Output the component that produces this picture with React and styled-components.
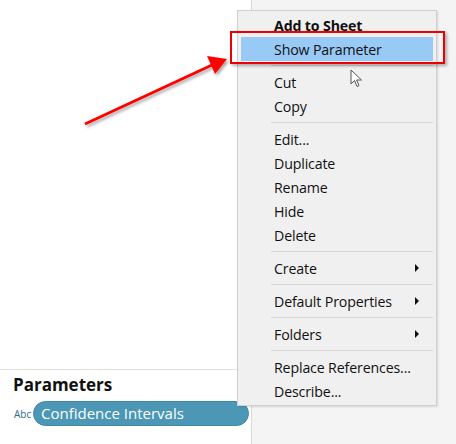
import React from "react";
import styled, { createGlobalStyle } from "styled-components";

const GlobalStyle = createGlobalStyle`
  html, body {
    margin: 0;
    padding: 0;
    background: #f4f4f4;
  }
  #root {
    width: 456px;
    height: 444px;
    overflow: hidden;
  }
`;

const menuItems = [
  { label: "Add to Sheet", bold: true },
  { label: "Show Parameter", active: true },
  { sep: true },
  { label: "Cut" },
  { label: "Copy" },
  { sep: true },
  { label: "Edit..." },
  { label: "Duplicate" },
  { label: "Rename" },
  { label: "Hide" },
  { label: "Delete" },
  { sep: true },
  { label: "Create", sub: true },
  { sep: true },
  { label: "Default Properties", sub: true },
  { sep: true },
  { label: "Folders", sub: true },
  { sep: true },
  { label: "Replace References..." },
  { label: "Describe..." },
];

export default function App() {
  return (
    <>
      <GlobalStyle />
      <Page>
        <LeftPanel>
          <ParamSection>
            <SectionTitle>Parameters</SectionTitle>
            <ParamRow>
              <TypeTag>Abc</TypeTag>
              <Pill>Confidence Intervals</Pill>
            </ParamRow>
          </ParamSection>
        </LeftPanel>
        <RightArea />

        <Menu>
          {menuItems.map((item, i) =>
            item.sep ? (
              <Separator key={i} />
            ) : (
              <MenuItem key={i} $bold={item.bold} $active={item.active}>
                <span>{item.label}</span>
                {item.sub && <SubArrow />}
              </MenuItem>
            )
          )}
        </Menu>

        <Highlight />

        <Cursor width="14" height="20" viewBox="0 0 14 20">
          <path
            d="M1 1 L1 15 L4.5 11.5 L7 17.5 L9 16.6 L6.6 11 L11.5 11 Z"
            fill="#fff"
            stroke="#555"
            strokeWidth="1"
            strokeLinejoin="round"
          />
        </Cursor>

        <Arrow width="160" height="80" viewBox="0 0 160 80">
          <defs>
            <filter id="sh" x="-20%" y="-20%" width="140%" height="140%">
              <feDropShadow dx="2" dy="2" stdDeviation="1.5" floodColor="#000" floodOpacity="0.35" />
            </filter>
          </defs>
          <g filter="url(#sh)">
            <line x1="5" y1="73" x2="132" y2="14" stroke="#f00" strokeWidth="3" />
            <polygon points="147,8 127,5 135,23" fill="#f00" />
          </g>
        </Arrow>
      </Page>
    </>
  );
}

const Page = styled.div`
  position: relative;
  display: flex;
  width: 456px;
  height: 444px;
  font-family: "Open Sans", "Noto Sans", sans-serif;
`;

const LeftPanel = styled.div`
  width: 251px;
  background: #ffffff;
  border-right: 1px solid #d9d9d9;
  display: flex;
  flex-direction: column;
  justify-content: flex-end;
`;

const ParamSection = styled.div`
  height: 75px;
  border-top: 1px solid #e2e2e2;
  box-sizing: border-box;
  padding: 3px 0 0 13px;
`;

const SectionTitle = styled.div`
  font-size: 17px;
  font-weight: 700;
  color: #111;
  line-height: 23px;
`;

const ParamRow = styled.div`
  display: flex;
  align-items: center;
  margin-top: 5px;
`;

const TypeTag = styled.span`
  font-size: 10px;
  color: #2f6a8a;
  width: 20px;
  margin-left: 1px;
`;

const Pill = styled.div`
  width: 216px;
  height: 25px;
  box-sizing: border-box;
  background: #4b97b5;
  border: 1px solid #3f88a6;
  border-radius: 13px;
  color: #fff;
  font-size: 15px;
  line-height: 22px;
  padding-left: 7px;
  margin-left: -1px;
`;

const RightArea = styled.div`
  flex: 1;
  background: #f4f4f4;
`;

const Menu = styled.div`
  position: absolute;
  left: 237px;
  top: 10px;
  width: 200px;
  box-sizing: border-box;
  padding: 2px 3px;
  background: #f0f0f0;
  border: 1px solid #cfcfcf;
  box-shadow: 1px 1px 2px rgba(0, 0, 0, 0.12);
`;

const MenuItem = styled.div`
  height: 24px;
  display: flex;
  align-items: center;
  justify-content: space-between;
  padding: 0 14px 0 33px;
  font-size: 14.2px;
  font-weight: ${(p) => (p.$bold ? 700 : 400)};
  color: #111;
  background: ${(p) => (p.$active ? "#99c9f5" : "transparent")};
  letter-spacing: -0.15px;
`;

const SubArrow = styled.span`
  width: 0;
  height: 0;
  border-top: 4px solid transparent;
  border-bottom: 4px solid transparent;
  border-left: 4px solid #111;
`;

const Separator = styled.div`
  height: 1px;
  background: #d6d6d6;
  margin: 4px 0 4px 30px;
`;

const Highlight = styled.div`
  position: absolute;
  left: 230px;
  top: 31px;
  width: 215px;
  height: 33px;
  box-sizing: border-box;
  border: 2.5px solid #ee0000;
  box-shadow: 2px 2px 3px rgba(0, 0, 0, 0.3);
`;

const Cursor = styled.svg`
  position: absolute;
  left: 350px;
  top: 69px;
`;

const Arrow = styled.svg`
  position: absolute;
  left: 80px;
  top: 51px;
`;
